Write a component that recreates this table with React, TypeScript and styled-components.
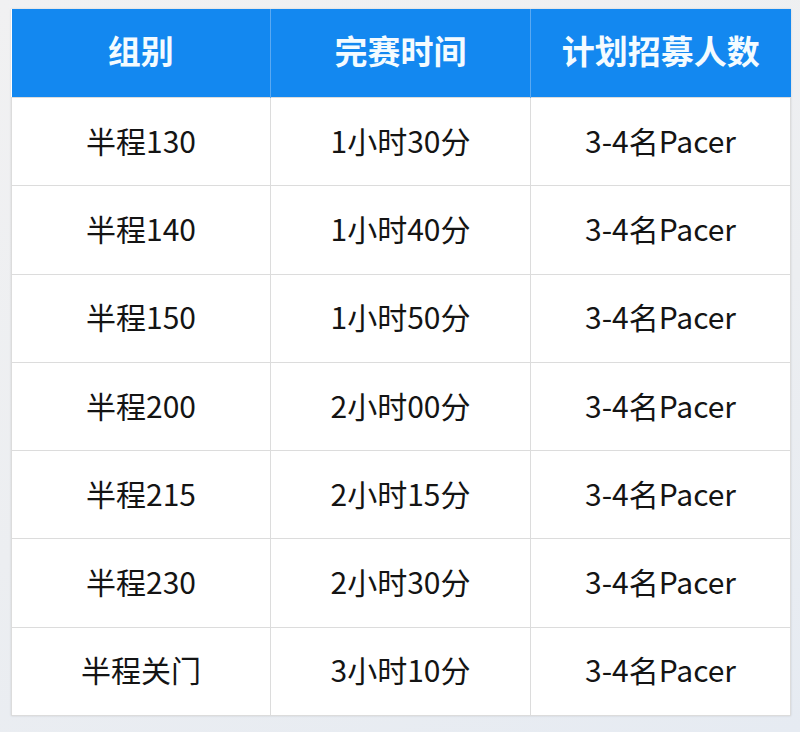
import React from "react";
import styled, { createGlobalStyle } from "styled-components";

const GlobalStyle = createGlobalStyle`
  html, body {
    margin: 0;
    padding: 0;
  }
  body {
    width: 800px;
    height: 732px;
    overflow: hidden;
    background: linear-gradient(160deg, #f1f1f2 0%, #eceef1 55%, #e6ebf2 100%);
    font-family: "Noto Sans CJK SC", "Noto Sans", sans-serif;
  }
`;

const Page = styled.div`
  padding: 9px 10px 0 11px;
`;

const Table = styled.table`
  width: 779px;
  border-collapse: collapse;
  table-layout: fixed;
  background: #ffffff;
  box-shadow: 0 0 2px rgba(0, 0, 0, 0.12);
`;

const HeadCell = styled.th`
  height: 82px;
  padding: 0 0 6px;
  background: #1388f0;
  color: #f4fbff;
  font-size: 33px;
  font-weight: 700;
  line-height: 1;
  text-align: center;
  border-left: 1px solid #5aa9f2;
  &:first-child {
    border-left: none;
  }
`;

const Cell = styled.td`
  height: 83.3px;
  padding: 0 0 4px;
  color: #141414;
  font-size: 30px;
  font-weight: 400;
  line-height: 1;
  text-align: center;
  border: 1px solid #dcdcdc;
`;

interface Row {
  group: string;
  time: string;
  count: string;
}

const rows: Row[] = [
  { group: "半程130", time: "1小时30分", count: "3-4名Pacer" },
  { group: "半程140", time: "1小时40分", count: "3-4名Pacer" },
  { group: "半程150", time: "1小时50分", count: "3-4名Pacer" },
  { group: "半程200", time: "2小时00分", count: "3-4名Pacer" },
  { group: "半程215", time: "2小时15分", count: "3-4名Pacer" },
  { group: "半程230", time: "2小时30分", count: "3-4名Pacer" },
  { group: "半程关门", time: "3小时10分", count: "3-4名Pacer" },
];

const App = () => {
  return (
    <>
      <GlobalStyle />
      <Page>
        <Table>
          <colgroup>
            <col style={{ width: 259 }} />
            <col style={{ width: 260 }} />
            <col style={{ width: 260 }} />
          </colgroup>
          <thead>
            <tr>
              <HeadCell>组别</HeadCell>
              <HeadCell>完赛时间</HeadCell>
              <HeadCell>计划招募人数</HeadCell>
            </tr>
          </thead>
          <tbody>
            {rows.map((r) => (
              <tr key={r.group}>
                <Cell>{r.group}</Cell>
                <Cell>{r.time}</Cell>
                <Cell>{r.count}</Cell>
              </tr>
            ))}
          </tbody>
        </Table>
      </Page>
    </>
  );
};

export default App;
